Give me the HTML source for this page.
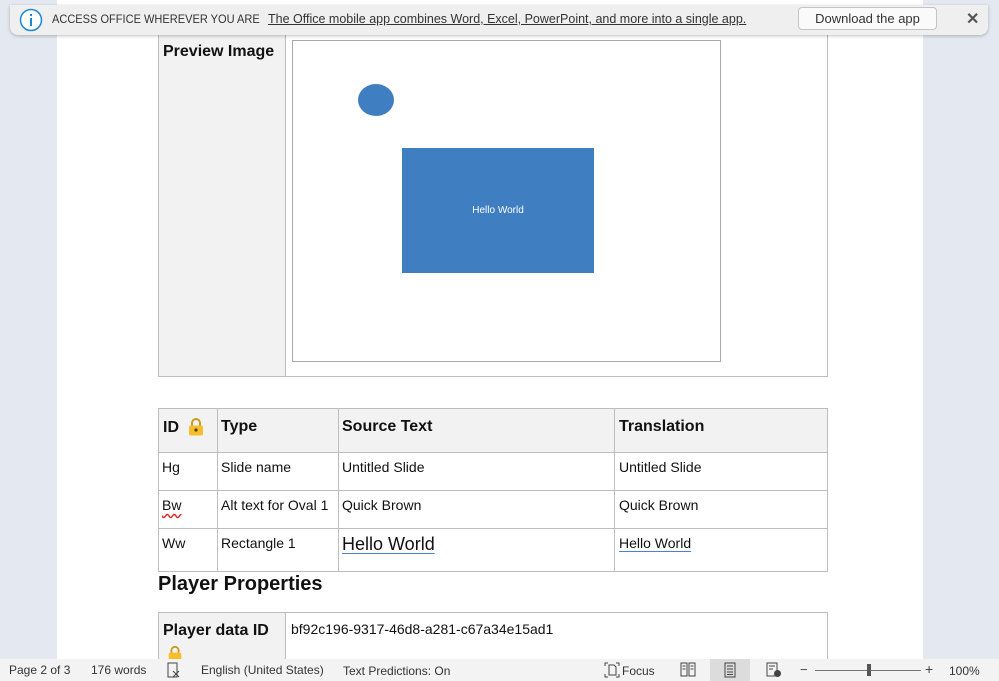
<!DOCTYPE html>
<html><head><meta charset="utf-8"><style>
*{margin:0;padding:0;box-sizing:border-box}
body{width:999px;height:681px;overflow:hidden;background:#e4e8f0;font-family:"Liberation Sans",sans-serif;position:relative;color:#111}
.a{position:absolute}
.page{left:57px;top:0;width:866px;height:660px;background:#fff}
.b{border:1px solid #bdbdbd}
.t{font-size:14px;white-space:nowrap}
.h{font-weight:bold;font-size:16px;white-space:nowrap}
.vl{width:1px;background:#bdbdbd}
.hl{height:1px;background:#bdbdbd}
.ul{text-decoration:underline;text-decoration-color:#4a7fd6;text-underline-offset:3px}
</style></head><body>
<div class="a page"></div>
<!-- table 1 -->
<div class="a b" style="left:158px;top:34px;width:670px;height:343px"></div>
<div class="a" style="left:159px;top:35px;width:127px;height:341px;background:#f2f2f2;border-right:1px solid #bdbdbd"></div>
<div class="a h" style="left:163px;top:43px">Preview Image</div>
<div class="a b" style="left:292px;top:40px;width:429px;height:322px;border-color:#a8a8a8"></div>
<div class="a" style="left:358px;top:84px;width:36px;height:32px;border-radius:50%;background:#3f7fc1"></div>
<div class="a" style="left:402px;top:148px;width:192px;height:125px;background:#3f7fc1;color:#fff;font-size:10px;display:flex;align-items:center;justify-content:center">Hello World</div>
<!-- table 2 -->
<div class="a b" style="left:158px;top:408px;width:670px;height:164px"></div>
<div class="a" style="left:159px;top:409px;width:668px;height:43px;background:#f2f2f2"></div>
<div class="a hl" style="left:158px;top:452px;width:670px"></div>
<div class="a hl" style="left:158px;top:490px;width:670px"></div>
<div class="a hl" style="left:158px;top:528px;width:670px"></div>
<div class="a vl" style="left:217px;top:408px;height:164px"></div>
<div class="a vl" style="left:338px;top:408px;height:164px"></div>
<div class="a vl" style="left:614px;top:408px;height:164px"></div>
<div class="a h" style="left:163px;top:419px">ID</div>
<svg class="a" style="left:186px;top:417px" width="20" height="20" viewBox="0 0 20 20"><path d="M6 9V6a4 4 0 0 1 8 0v3" fill="none" stroke="#c79a1e" stroke-width="2"/><rect x="3" y="8.5" width="14" height="10" rx="2" fill="#f6be2c"/><circle cx="10" cy="13" r="1.6" fill="#5a3d00"/></svg>
<div class="a h" style="left:221px;top:418px">Type</div>
<div class="a h" style="left:342px;top:418px">Source Text</div>
<div class="a h" style="left:619px;top:418px">Translation</div>
<div class="a t" style="left:162px;top:459px">Hg</div>
<div class="a t" style="left:221px;top:459px">Slide name</div>
<div class="a t" style="left:342px;top:459px">Untitled Slide</div>
<div class="a t" style="left:619px;top:459px">Untitled Slide</div>
<div class="a t" style="left:162px;top:497px;text-decoration:underline wavy #d22;text-underline-offset:3px">Bw</div>
<div class="a t" style="left:221px;top:497px">Alt text for Oval 1</div>
<div class="a t" style="left:342px;top:497px">Quick Brown</div>
<div class="a t" style="left:619px;top:497px">Quick Brown</div>
<div class="a t" style="left:162px;top:535px">Ww</div>
<div class="a t" style="left:221px;top:535px">Rectangle 1</div>
<div class="a t ul" style="left:342px;top:534px;font-size:18px">Hello World</div>
<div class="a t ul" style="left:619px;top:535px">Hello World</div>
<div class="a" style="left:158px;top:573px;font-weight:bold;font-size:20px">Player Properties</div>
<!-- table 3 -->
<div class="a b" style="left:158px;top:612px;width:670px;height:60px"></div>
<div class="a" style="left:159px;top:613px;width:127px;height:50px;background:#f2f2f2;border-right:1px solid #bdbdbd"></div>
<div class="a h" style="left:163px;top:622px">Player data ID</div>
<div class="a t" style="left:291px;top:621px">bf92c196-9317-46d8-a281-c67a34e15ad1</div>
<svg class="a" style="left:166px;top:645px" width="18" height="18" viewBox="0 0 20 20"><path d="M6 9V6a4 4 0 0 1 8 0v3" fill="none" stroke="#c79a1e" stroke-width="2"/><rect x="3" y="8.5" width="14" height="10" rx="2" fill="#f6be2c"/></svg>
<!-- banner -->
<div class="a" style="left:10px;top:5px;width:978px;height:30px;background:#efefef;border-radius:0 0 8px 8px;box-shadow:0 1px 3px rgba(0,0,0,.25)"></div>
<svg class="a" style="left:19px;top:8px" width="24" height="24" viewBox="0 0 24 24"><circle cx="12" cy="12" r="10.5" fill="#fff" stroke="#1a86d6" stroke-width="1.5"/><rect x="11" y="10" width="2" height="8" fill="#1a86d6"/><rect x="11" y="6" width="2" height="2" fill="#1a86d6"/></svg>
<div class="a" style="left:52px;top:12px;font-size:12px;color:#333;white-space:nowrap;transform:scaleX(0.92);transform-origin:0 0">ACCESS OFFICE WHEREVER YOU ARE</div>
<div class="a" style="left:268px;top:12px;font-size:12.5px;color:#333;white-space:nowrap;text-decoration:underline">The Office mobile app combines Word, Excel, PowerPoint, and more into a single app.</div>
<div class="a" style="left:798px;top:7px;width:139px;height:23px;border:1px solid #c4c4c4;border-radius:4px;background:#fafafa;font-size:13px;color:#333;text-align:center;line-height:21px">Download the app</div>
<div class="a" style="left:966px;top:9px;font-size:16px;font-weight:bold;color:#555">✕</div>
<!-- status bar -->
<div class="a" style="left:0;top:659px;width:999px;height:22px;background:#f3f3f3;font-size:12px;color:#333"></div>
<div class="a" style="top:663px;left:9px;font-size:12px;color:#333;white-space:nowrap">Page 2 of 3</div>
<div class="a" style="top:663px;left:91px;font-size:12px;color:#333;white-space:nowrap">176 words</div>
<svg class="a" style="left:167px;top:662px" width="14" height="16" viewBox="0 0 14 16"><path d="M1 1h9v14H1zM6 9l6 6M12 9l-6 6" fill="none" stroke="#444"/></svg>
<div class="a" style="top:663px;left:201px;font-size:12px;color:#333;white-space:nowrap">English (United States)</div>
<div class="a" style="top:664px;left:343px;font-size:12px;color:#333;white-space:nowrap">Text Predictions: On</div>
<svg class="a" style="left:604px;top:662px" width="16" height="16" viewBox="0 0 16 16"><path d="M1 4V1h3M12 1h3v3M15 12v3h-3M4 15H1v-3M5 3h5l2 2v8H5z" fill="none" stroke="#444"/></svg>
<div class="a" style="top:664px;left:622px;font-size:12px;color:#333">Focus</div>
<svg class="a" style="left:680px;top:662px" width="16" height="15" viewBox="0 0 16 15"><path d="M1 1h6v13H1zM9 1h6v13H9zM2.5 4h3M2.5 7h3M10.5 4h3M10.5 7h3" fill="none" stroke="#444"/></svg>
<div class="a" style="left:710px;top:659px;width:40px;height:22px;background:#dcdcdc"></div>
<svg class="a" style="left:723px;top:662px" width="14" height="16" viewBox="0 0 14 16"><path d="M2 1h10v14H2zM4 4h6M4 7h6M4 10h6M4 12.5h6" fill="none" stroke="#444"/></svg>
<svg class="a" style="left:766px;top:662px" width="16" height="16" viewBox="0 0 16 16"><path d="M1 1h10v13H1zM3 4h6M3 7h4" fill="none" stroke="#444"/><circle cx="11.5" cy="11.5" r="3.5" fill="#444"/></svg>
<div class="a" style="top:662px;left:800px;font-size:13px;color:#444">−</div>
<div class="a" style="left:815px;top:670px;width:106px;height:1px;background:#777"></div>
<div class="a" style="left:867px;top:664px;width:4px;height:12px;background:#555"></div>
<div class="a" style="top:661px;left:925px;font-size:14px;color:#444">+</div>
<div class="a" style="top:664px;left:949px;font-size:12px;color:#333">100%</div>
</body></html>
